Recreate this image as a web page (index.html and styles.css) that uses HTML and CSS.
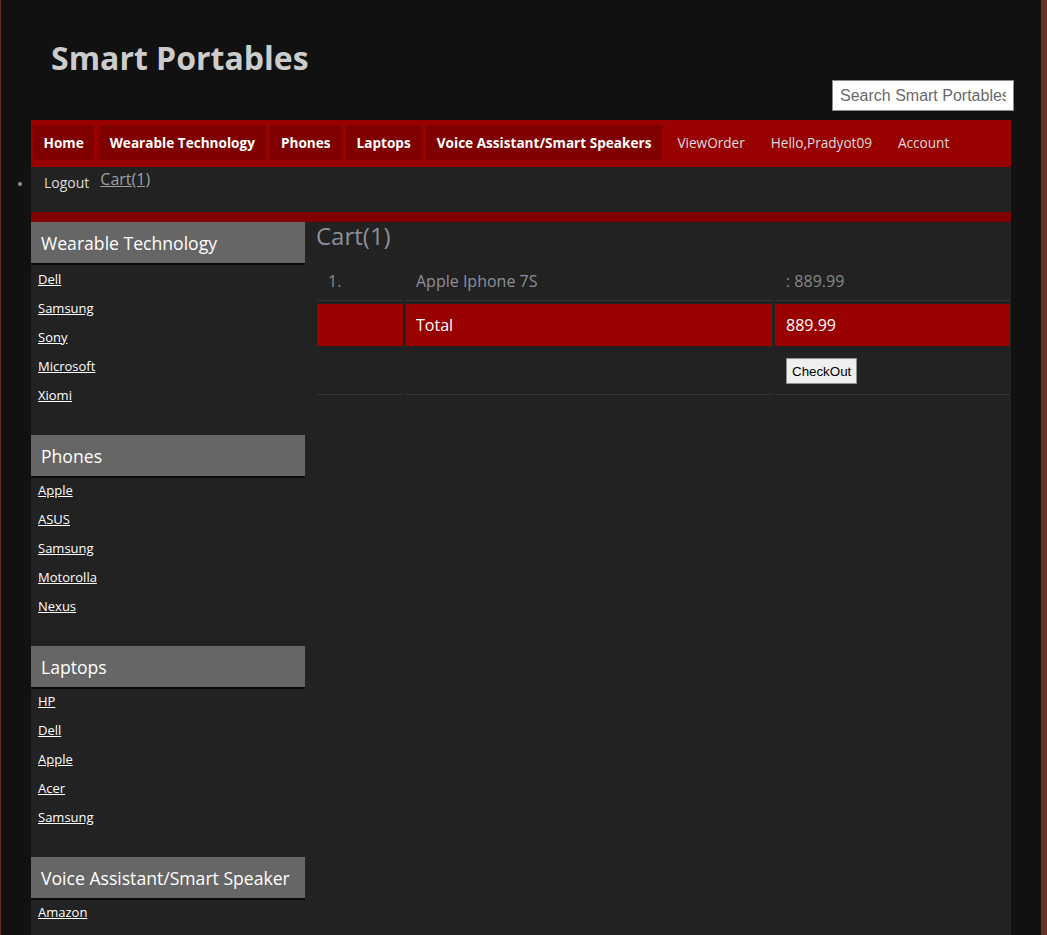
FILE: index.html
```html
<!DOCTYPE html>
<html lang="en">
<head>
<meta charset="utf-8">
<title>Smart Portables - Cart</title>
<link rel="stylesheet" href="styles.css">
</head>
<body>
<div class="page">
  <header class="masthead">
    <h1 class="logo">Smart Portables</h1>
    <div class="search-row">
      <input class="search" type="text" placeholder="Search Smart Portables">
    </div>
  </header>

  <div class="frame">
    <nav class="mainnav">
      <ul class="navlist">
        <li class="navitem active">Home</li>
        <li class="navitem active">Wearable Technology</li>
        <li class="navitem active">Phones</li>
        <li class="navitem active">Laptops</li>
        <li class="navitem active">Voice Assistant/Smart Speakers</li>
        <li class="navitem">ViewOrder</li>
        <li class="navitem">Hello,Pradyot09</li>
        <li class="navitem">Account</li>
      </ul>
    </nav>
    <div class="subnav">
      <ul class="sublist">
        <li class="logout">Logout</li>
      </ul>
      <a class="cartlink" href="#">Cart(1)</a>
    </div>
    <div class="divider"></div>

    <div class="body">
      <aside class="sidebar">
        <section class="cat">
          <h2 class="cat-title">Wearable Technology</h2>
          <ul class="cat-links">
            <li><a href="#">Dell</a></li>
            <li><a href="#">Samsung</a></li>
            <li><a href="#">Sony</a></li>
            <li><a href="#">Microsoft</a></li>
            <li><a href="#">Xiomi</a></li>
          </ul>
        </section>
        <section class="cat">
          <h2 class="cat-title">Phones</h2>
          <ul class="cat-links">
            <li><a href="#">Apple</a></li>
            <li><a href="#">ASUS</a></li>
            <li><a href="#">Samsung</a></li>
            <li><a href="#">Motorolla</a></li>
            <li><a href="#">Nexus</a></li>
          </ul>
        </section>
        <section class="cat">
          <h2 class="cat-title">Laptops</h2>
          <ul class="cat-links">
            <li><a href="#">HP</a></li>
            <li><a href="#">Dell</a></li>
            <li><a href="#">Apple</a></li>
            <li><a href="#">Acer</a></li>
            <li><a href="#">Samsung</a></li>
          </ul>
        </section>
        <section class="cat">
          <h2 class="cat-title">Voice Assistant/Smart Speaker</h2>
          <ul class="cat-links">
            <li><a href="#">Amazon</a></li>
          </ul>
        </section>
      </aside>

      <main class="content">
        <h2 class="page-title">Cart(1)</h2>
        <div class="cart">
          <div class="cell c1 item">1.</div>
          <div class="cell c2 item name">Apple Iphone 7S</div>
          <div class="cell c3 item">: 889.99</div>

          <div class="cell c1 total"></div>
          <div class="cell c2 total">Total</div>
          <div class="cell c3 total">889.99</div>

          <div class="cell c1 action"></div>
          <div class="cell c2 action"></div>
          <div class="cell c3 action"><button class="checkout" type="button">CheckOut</button></div>
        </div>
      </main>
    </div>
  </div>
</div>
</body>
</html>
```

FILE: styles.css
```css
html, body {
  margin: 0;
  padding: 0;
}

body {
  background: #663322;
  font-family: "Open Sans", "DejaVu Sans", sans-serif;
}

.page {
  margin-left: 1px;
  width: 1040px;
  height: 935px;
  overflow: hidden;
  background: #111111;
}

/* ---------- masthead ---------- */
.masthead {
  padding-top: 36px;
}

.logo {
  margin: 0;
  padding-left: 50px;
  height: 44px;
  line-height: 44px;
  font-size: 32px;
  font-weight: 700;
  color: #cccccc;
}

.search-row {
  display: flex;
  justify-content: flex-end;
  padding-right: 27px;
  margin-bottom: 9px;
}

.search {
  box-sizing: border-box;
  width: 182px;
  height: 31px;
  margin: 0;
  padding: 0 7px 0 7px;
  border: 1px solid #8a8a8a;
  background: #ffffff;
  font-family: "Liberation Sans", Arial, sans-serif;
  font-size: 16px;
  color: #333;
  outline: none;
}

.search::placeholder {
  color: #6b6b6b;
}

/* ---------- frame ---------- */
.frame {
  margin-left: 30px;
  width: 980px;
  height: 815px;
  background: #222222;
}

.mainnav {
  height: 47px;
  background: #990000;
}

.navlist {
  display: flex;
  margin: 0;
  padding: 6px 0 0 2px;
  list-style: none;
}

.navitem {
  box-sizing: border-box;
  height: 34px;
  line-height: 32px;
  padding: 0 9.5px;
  margin-right: 5px;
  border: 1px solid transparent;
  font-size: 13.6px;
  color: #dddddd;
  white-space: nowrap;
}

.navitem.active {
  background: #800000;
  border-color: #760000;
  font-weight: 700;
  color: #ffffff;
}

.subnav {
  display: flex;
  align-items: flex-start;
  height: 45px;
}

.sublist {
  margin: 0;
  padding: 0 0 0 2px;
}

.logout {
  list-style: disc outside;
  height: 32px;
  line-height: 32px;
  padding: 0 11px;
  font-size: 14px;
  color: #dddddd;
}

.logout::marker {
  color: #8a93a6;
  font-size: 11px;
}

.cartlink {
  margin-left: 0;
  padding-top: 1px;
  line-height: 22px;
  font-size: 16px;
  color: #a0a0a0;
  text-decoration: underline;
}

.divider {
  height: 10px;
  background: #800000;
}

/* ---------- body ---------- */
.body {
  display: flex;
  align-items: flex-start;
}

.sidebar {
  width: 274px;
  flex: none;
}

.cat {
  margin-bottom: 25px;
}

.cat-title {
  margin: 0;
  box-sizing: border-box;
  height: 41px;
  line-height: 41px;
  padding: 1px 10px 0;
  background: #666666;
  box-shadow: 0 2px 0 #0b0b0b;
  font-size: 17.6px;
  font-weight: 400;
  color: #ffffff;
  white-space: nowrap;
  overflow: hidden;
}

.cat-links {
  margin: 0;
  padding: 0 0 0 7px;
  list-style: none;
}

.cat:first-child .cat-links {
  padding-top: 2px;
}

.cat-links li {
  height: 29px;
  line-height: 29px;
  font-size: 13px;
}

.cat-links a {
  color: #ffffff;
  text-decoration: underline;
}

.content {
  flex: 1;
  padding-left: 11px;
}

.page-title {
  margin: 0 0 12px;
  line-height: 28px;
  font-size: 24px;
  font-weight: 400;
  color: #8c9099;
}

.cart {
  display: grid;
  grid-template-columns: 86px 366px 235px;
  gap: 3px;
  margin-left: 1px;
}

.cell {
  font-size: 16px;
  line-height: 22px;
  padding-left: 11px;
}

.cell.c2 {
  padding-left: 10px;
}

.cell.item {
  padding-top: 8px;
  padding-bottom: 8px;
  border-bottom: 1px solid #363636;
  color: #888888;
}

.cell.name {
  color: #8b8f9b;
}

.cell.total {
  padding-top: 10px;
  padding-bottom: 10px;
  background: #990000;
  color: #ffffff;
}

.cell.action {
  box-sizing: border-box;
  height: 46px;
  padding-top: 9px;
  border-bottom: 1px solid #363636;
}

.cell.c3.action {
  padding-left: 11px;
}

.checkout {
  box-sizing: border-box;
  height: 26px;
  margin: 0;
  padding: 0 5px;
  border: 1px solid #8f8f8f;
  border-radius: 0;
  background: #efefef;
  font-family: "Liberation Sans", Arial, sans-serif;
  font-size: 13.33px;
  color: #000000;
}
```
